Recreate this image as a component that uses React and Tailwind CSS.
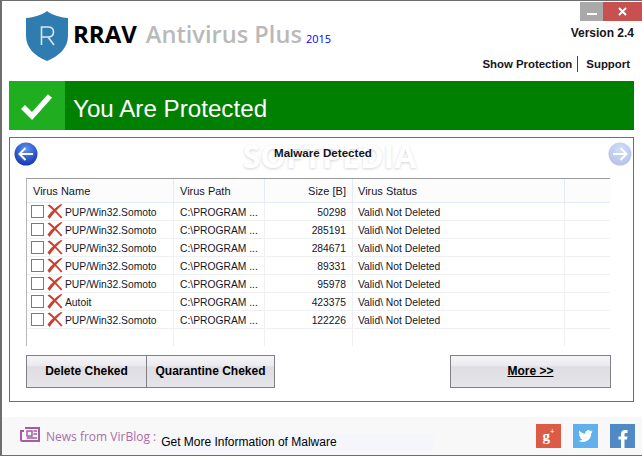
import React from "react";

const rows = [
  { name: "PUP/Win32.Somoto", size: "50298" },
  { name: "PUP/Win32.Somoto", size: "285191" },
  { name: "PUP/Win32.Somoto", size: "284671" },
  { name: "PUP/Win32.Somoto", size: "89331" },
  { name: "PUP/Win32.Somoto", size: "95978" },
  { name: "Autoit", size: "423375" },
  { name: "PUP/Win32.Somoto", size: "122226" },
];

const Shield = () => (
  <svg width="42" height="50" viewBox="0 0 42 50">
    <path d="M21 0C16 4 8 6.500 0 7V25C0 37 9 45 21 50C33 45 42 37 42 25V7C34 6.500 26 4 21 0Z" fill="#2f7cb1" />
    <path d="M15.500 34V16H22C25.500 16 27.500 18 27.500 21C27.500 24 25.500 26 22 26H15.500M22 26L28 34" fill="none" stroke="#d8e8f2" strokeWidth="1.600" />
  </svg>
);

const Check = () => (
  <svg width="32" height="28" viewBox="0 0 32 28">
    <path d="M2 15L11 24L29 4" fill="none" stroke="#fff" strokeWidth="5.500" />
  </svg>
);

// tapered strokes, thicker on the lower left like the original bitmap
const RedX = () => (
  <svg width="16" height="15" viewBox="0 0 16 15">
    <path d="M0.500 1.500L2.500 0.500C6.500 3.500 11 8.500 15.500 13.500L14 14.500C10 10 5.500 5 0.500 1.500Z" fill="#dd3a2c" />
    <path d="M15.500 0.500L14 0C9.500 2.500 4.500 7 0.500 12.500L2.500 15C6 10 10.500 5 15.500 0.500Z" fill="#c9402f" />
  </svg>
);

const RoundArrow = ({ dir, faded }) => (
  <svg width="24" height="24" viewBox="0 0 24 24" className={faded ? "opacity-30" : ""}>
    <defs>
      <radialGradient id={"ball" + dir} cx="50%" cy="30%" r="75%">
        <stop offset="0%" stopColor="#5f96ee" />
        <stop offset="100%" stopColor="#0c2fb0" />
      </radialGradient>
    </defs>
    <circle cx="12" cy="12" r="11.500" fill={"url(#ball" + dir + ")"} />
    <path
      d={dir === "left" ? "M19 12H6M11.500 6L5.500 12L11.500 18" : "M5 12H18M12.500 6L18.500 12L12.500 18"}
      fill="none"
      stroke="#fff"
      strokeWidth="2"
    />
  </svg>
);

const btn =
  "h-[33px] border border-[#808086] bg-[linear-gradient(#f4f4f6_0%,#ecebef_30%,#dedde2_36%,#e6e6ea_100%)] text-[12px] font-bold text-black flex items-center justify-center pb-[2px]";

const App = () => {
  return (
    <div className="w-[642px] h-[456px] border-t border-b border-l-2 border-[#6e6e6e] bg-white flex flex-col overflow-hidden font-['Liberation_Sans',sans-serif]">
      {/* header */}
      <div className="h-[80px] flex justify-between pl-[24px] shrink-0">
        <div className="flex items-start pt-[10px]">
          <Shield />
          <div className="ml-[5px] mt-[7px] flex items-baseline font-['Open_Sans',sans-serif] leading-[32px]">
            <span className="text-[24px] font-bold text-black">RRAV</span>
            <span className="ml-[9px] text-[23.600px] font-semibold text-[#b9b9b9]">Antivirus Plus</span>
            <span className="ml-[4px] text-[11px] text-[#0000ff]">2015</span>
          </div>
        </div>
        <div className="flex flex-col items-end pt-[1px]">
          <div className="flex h-[19px]">
            <div className="w-[23px] bg-[#a9a9a9] flex items-center justify-center">
              <div className="w-[10px] h-[2px] bg-white mt-[4px]" />
            </div>
            <div className="w-[39px] bg-[#c75050] flex items-center justify-center text-white">
              <svg width="9" height="9" viewBox="0 0 9 9">
                <path d="M1 1L8 8M8 1L1 8" stroke="#fff" strokeWidth="2" />
              </svg>
            </div>
          </div>
          <div className="mt-[5px] mr-[8px] text-[12px] font-bold text-[#15151f] leading-[14px]">Version 2.4</div>
          <div className="mt-[16px] mr-[12px] flex items-center text-[11.400px] font-bold text-[#15151f] leading-[16px]">
            <span>Show Protection</span>
            <span className="ml-[5px] mr-[8px] w-px h-[16px] bg-[#a01c1c]" />
            <span>Support</span>
          </div>
        </div>
      </div>

      {/* status bar */}
      <div className="ml-[7px] w-[625px] h-[49px] bg-[#008000] flex items-center shrink-0">
        <div className="w-[56px] h-full bg-[#1fae1f] flex items-center justify-center">
          <Check />
        </div>
        <span className="ml-[8px] mt-[7px] text-[24.200px] text-white">You Are Protected</span>
      </div>

      {/* main panel */}
      <div className="relative ml-[7px] mt-[7px] w-[625px] h-[265px] border border-[#6e6e6e] pt-[4px] shrink-0">
        <div className="absolute left-[157px] w-[325px] top-[2px] text-center text-[32px] leading-[32px] font-bold text-white [text-shadow:0_1px_3px_#d4d4d4] font-['Open_Sans',sans-serif] pointer-events-none">
          SOFTPEDIA
        </div>
        <div className="relative flex items-center justify-between pl-[4px] pr-[1px] h-[24px]">
          <RoundArrow dir="left" />
          <span className="text-[11.600px] font-bold text-[#15151f] -translate-y-[1px]">Malware Detected</span>
          <RoundArrow dir="right" faded />
        </div>

        <div className="relative mt-[12px] ml-[16px] w-[584px] h-[168px] border-l border-t border-t-[#9a9a9a] border-l-[#b8b8b8] flex flex-col text-[10.300px] text-[#15151f]">
          <div className="grid grid-cols-[147px_91px_88px_212px_1fr] h-[24px] items-stretch border-b border-[#e3ebf7] bg-[#fcfcfd] text-[11px] shrink-0">
            <div className="pl-[6px] pt-[2px] flex items-center border-r border-[#e3ebf7]">Virus Name</div>
            <div className="pl-[6px] pt-[2px] flex items-center border-r border-[#e3ebf7]">Virus Path</div>
            <div className="pr-[6px] pt-[2px] flex items-center justify-end border-r border-[#e3ebf7]">Size [B]</div>
            <div className="pl-[5px] pt-[2px] flex items-center border-r border-[#e3ebf7]">Virus Status</div>
            <div />
          </div>
          {rows.map((row, index) => (
            <div key={index} className="grid grid-cols-[147px_91px_88px_212px_1fr] h-[18px] items-stretch border-b border-[#eef0f3] shrink-0">
              <div className="pl-[4px] flex items-center border-r border-[#eef0f3]">
                <span className="w-[13px] h-[13px] border border-[#7a7a7a] bg-white shrink-0" />
                <span className="ml-[3px]"><RedX /></span>
                <span className="ml-[2px] pt-[2px]">{row.name}</span>
              </div>
              <div className="pl-[6px] pt-[2px] flex items-center border-r border-[#eef0f3]">C:\PROGRAM ...</div>
              <div className="pr-[6px] pt-[2px] flex items-center justify-end border-r border-[#eef0f3]">{row.size}</div>
              <div className="pl-[5px] pt-[2px] flex items-center border-r border-[#eef0f3]">Valid\ Not Deleted</div>
              <div />
            </div>
          ))}
          <div className="grid grid-cols-[147px_91px_88px_212px_1fr] flex-1">
            <div className="border-r border-[#eef0f3]" />
            <div className="border-r border-[#eef0f3]" />
            <div className="border-r border-[#eef0f3]" />
            <div className="border-r border-[#eef0f3]" />
            <div />
          </div>
        </div>

        <div className="relative mt-[9px] ml-[16px] flex justify-between w-[585px]">
          <div className="flex">
            <div className={"w-[121px] " + btn}>Delete Cheked</div>
            <div className={"w-[129px] -ml-[1px] " + btn}>Quarantine Cheked</div>
          </div>
          <div className={"w-[161px] underline " + btn}>More &gt;&gt;</div>
        </div>
      </div>

      {/* footer */}
      <div className="mt-[15px] flex-1 bg-[#f7f8f7] flex items-center pl-[18px]">
        <svg width="20" height="16" viewBox="0 0 20 16" className="mt-[-2px]">
          <path d="M5 1H19V14H2.500C1.500 14 1 13.500 1 12.500V4H4" fill="none" stroke="#a55aa5" strokeWidth="2" />
          <path d="M7 4H12V9H7ZM13.500 4H17M13.500 7H17M7 11H17" fill="none" stroke="#a55aa5" strokeWidth="1.500" />
        </svg>
        <span className="ml-[6px] mt-[1px] text-[12px] text-[#a86fa8] font-['Open_Sans',sans-serif]">News from VirBlog :</span>
        <div className="ml-[5px] mt-[12px] w-[272px] h-[17px] bg-[#f4f6fb] text-[12px] text-black leading-[17px]">
          Get More Information of Malware
        </div>
        <div className="ml-auto mr-[7px] flex gap-[12px]">
          <div className="w-[25px] h-[24px] bg-[#dc5b46] flex items-center justify-center text-white text-[15px] font-['Liberation_Serif',serif] font-bold">
            g<sup className="text-[8px]">+</sup>
          </div>
          <div className="w-[25px] h-[24px] bg-[#5fb0ec] flex items-center justify-center">
            <svg width="15" height="12" viewBox="0 0 24 20">
              <path d="M24 2.500c-.900.400-1.800.700-2.800.800 1-.600 1.800-1.500 2.200-2.700-1 .600-2 1-3.100 1.200A4.900 4.900 0 0 0 11.900 6.300C7.800 6.100 4.200 4.100 1.700.900.300 3.200 1 6.100 3.200 7.500c-.800 0-1.600-.200-2.200-.600 0 2.300 1.600 4.400 3.900 4.900-.700.200-1.500.200-2.200.100.600 2 2.400 3.400 4.600 3.400A9.900 9.900 0 0 1 0 17.800 14 14 0 0 0 21.500 5.400c1-.700 1.800-1.600 2.500-2.900z" fill="#fff" />
            </svg>
          </div>
          <div className="w-[25px] h-[24px] bg-[#4f8ac6] flex items-end justify-center">
            <svg width="10" height="19" viewBox="0 0 10 19">
              <path d="M3 19V10.500H0.500V7.500H3V5C3 2.300 4.500 1 7 1H9.500V4H8C6.800 4 6.500 4.500 6.500 5.500V7.500H9.500L9 10.500H6.500V19Z" fill="#fff" />
            </svg>
          </div>
        </div>
      </div>
    </div>
  );
};

export default App;
